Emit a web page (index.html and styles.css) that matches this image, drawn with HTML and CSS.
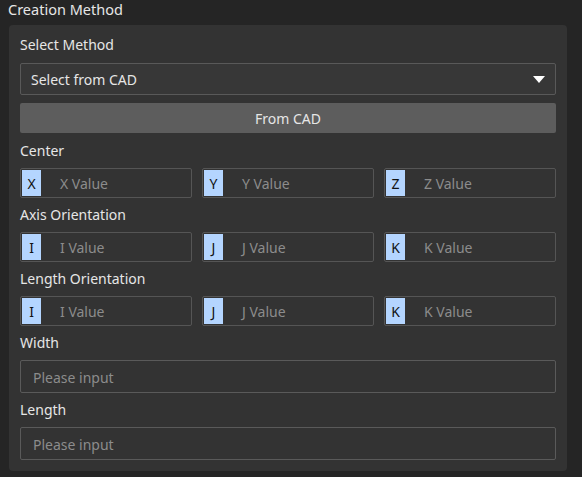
FILE: index.html
```html
<!DOCTYPE html>
<html>
<head>
<meta charset="utf-8">
<link rel="stylesheet" href="styles.css">
</head>
<body>
<div class="title">Creation Method</div>
<div class="panel">
  <div class="label">Select Method</div>
  <div class="select">
    <span>Select from CAD</span>
    <svg class="caret" width="12" height="7" viewBox="0 0 12 7"><path d="M0 0 H12 L6 7 Z" fill="#ffffff"/></svg>
  </div>
  <div class="button">From CAD</div>

  <div class="label">Center</div>
  <div class="row">
    <div class="vinput"><span class="pre">X</span><span class="ph">X Value</span></div>
    <div class="vinput"><span class="pre">Y</span><span class="ph">Y Value</span></div>
    <div class="vinput"><span class="pre">Z</span><span class="ph">Z Value</span></div>
  </div>

  <div class="label">Axis Orientation</div>
  <div class="row">
    <div class="vinput"><span class="pre">I</span><span class="ph">I Value</span></div>
    <div class="vinput"><span class="pre">J</span><span class="ph">J Value</span></div>
    <div class="vinput"><span class="pre">K</span><span class="ph">K Value</span></div>
  </div>

  <div class="label">Length Orientation</div>
  <div class="row">
    <div class="vinput"><span class="pre">I</span><span class="ph">I Value</span></div>
    <div class="vinput"><span class="pre">J</span><span class="ph">J Value</span></div>
    <div class="vinput"><span class="pre">K</span><span class="ph">K Value</span></div>
  </div>

  <div class="label">Width</div>
  <div class="textinput">Please input</div>

  <div class="label">Length</div>
  <div class="textinput">Please input</div>
</div>
</body>
</html>
```

FILE: styles.css
```css
html, body {
  margin: 0;
  padding: 0;
  background: #252525;
  font-family: "Noto Sans", "Open Sans", sans-serif;
  font-size: 14px;
  color: #e6e6e6;
}
.title {
  height: 25px;
  line-height: 18px;
  padding-left: 8px;
  font-size: 14.5px;
}
.panel {
  margin: 0 15px 0 9px;
  background: #333333;
  border-radius: 4px;
  padding: 10px 11px 11px 11px;
  display: flex;
  flex-direction: column;
}
.label {
  height: 20px;
  line-height: 20px;
  margin-bottom: 7px;
}
.select {
  box-sizing: border-box;
  height: 32px;
  border: 1px solid #595959;
  border-radius: 2px;
  background: #373737;
  display: flex;
  align-items: center;
  justify-content: space-between;
  padding: 1px 10px 0 10px;
  margin-top: 1px;
  margin-bottom: 8px;
}
.button {
  height: 30px;
  line-height: 31px;
  background: #5d5d5d;
  border-radius: 2px;
  text-align: center;
  margin-bottom: 8px;
}
.row {
  display: grid;
  grid-template-columns: 1fr 1fr 1fr;
  column-gap: 10px;
  margin-bottom: 7px;
}
.vinput {
  box-sizing: border-box;
  height: 30px;
  border: 1px solid #555555;
  border-radius: 2px;
  display: flex;
  align-items: stretch;
}
.pre {
  width: 19px;
  background: #b4d5ff;
  color: #111111;
  display: flex;
  align-items: center;
  justify-content: center;
  padding-top: 1px;
  margin: 1px 0 1px 1px;
}
.ph {
  color: #8c8c8c;
  display: flex;
  align-items: center;
  padding-left: 19px;
  padding-top: 1px;
}
.textinput {
  box-sizing: border-box;
  height: 33px;
  border: 1px solid #5a5a5a;
  border-radius: 2px;
  color: #8c8c8c;
  display: flex;
  align-items: center;
  padding-left: 12px;
  padding-top: 1px;
  margin-bottom: 7px;
}
.textinput:last-child { margin-bottom: 0; }
```
